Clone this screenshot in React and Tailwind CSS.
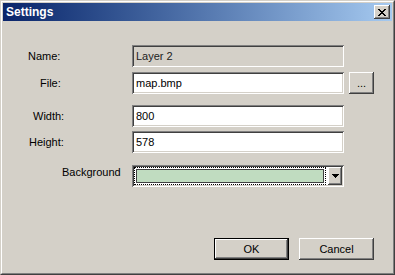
import React from "react";

const sunken =
  "shadow-[inset_1px_1px_#808080,inset_-1px_-1px_#ffffff,inset_2px_2px_#404040,inset_-2px_-2px_#d4d0c8]";
const raised =
  "shadow-[inset_-1px_-1px_#404040,inset_1px_1px_#ffffff,inset_-2px_-2px_#808080,inset_2px_2px_#d4d0c8]";

function Field({ value, disabled }) {
  return (
    <div
      className={`w-[212px] h-[22px] flex items-center pl-[4px] ${sunken} ${
        disabled ? "bg-[#d4d0c8] text-[#222]" : "bg-white text-black"
      }`}
    >
      {value}
    </div>
  );
}

function Label({ children, pl, extra = "" }) {
  return (
    <div className={`w-[129px] shrink-0 ${extra}`}>
      <span className={pl}>{children}</span>
    </div>
  );
}

function CloseGlyph() {
  const rows = [
    "XX....XX",
    ".XX..XX.",
    "..XXXX..",
    "...XX...",
    "..XXXX..",
    ".XX..XX.",
    "XX....XX",
  ];
  const rects = [];
  rows.forEach((r, y) =>
    r.split("").forEach((c, x) => {
      if (c === "X") rects.push(<rect key={`${x}-${y}`} x={x} y={y} width="1" height="1" />);
    })
  );
  return (
    <svg width="8" height="7" viewBox="0 0 8 7" shapeRendering="crispEdges" fill="#000">
      {rects}
    </svg>
  );
}

export default function App() {
  return (
    <div className="w-[395px] h-[275px] bg-[#d4d0c8] border border-t-[#d4d0c8] border-l-[#d4d0c8] border-r-[#404040] border-b-[#404040] font-['Liberation_Sans',Arial,sans-serif] text-[11px] text-black leading-[13px]">
      <div className="h-full border border-t-white border-l-white border-r-[#808080] border-b-[#808080] p-[1px] flex flex-col">
        {/* Title bar */}
        <div className="h-[18px] shrink-0 flex items-center justify-between pl-[3px] pr-[2px] bg-linear-to-r from-[#0a246a] to-[#a6caf0]">
          <span className="text-white font-bold text-[12px] leading-[14px]">Settings</span>
          <div className={`w-[16px] h-[14px] bg-[#d4d0c8] flex items-center justify-center ${raised}`}>
            <CloseGlyph />
          </div>
        </div>

        {/* Body */}
        <div className="flex-1 flex flex-col">
          <div className="mt-[24px] flex flex-col">
            <div className="flex items-center h-[22px]">
              <Label pl="pl-[25px]">Name:</Label>
              <Field value="Layer 2" disabled />
            </div>
            <div className="flex items-center h-[22px] mt-[5px]">
              <Label pl="pl-[37px]">File:</Label>
              <Field value="map.bmp" />
              <div
                className={`ml-[5px] w-[25px] h-[22px] bg-[#d4d0c8] flex items-center justify-center ${raised}`}
              >
                ...
              </div>
            </div>
            <div className="flex items-center h-[22px] mt-[11px]">
              <Label pl="pl-[30px]">Width:</Label>
              <Field value="800" />
            </div>
            <div className="flex items-center h-[22px] mt-[4px]">
              <Label pl="pl-[26px]">Height:</Label>
              <Field value="578" />
            </div>
            <div className="flex items-center h-[22px] mt-[12px]">
              <Label pl="pl-[59px]" extra="mb-[8px]">
                Background
              </Label>
              <div className={`w-[212px] h-[22px] bg-white p-[2px] flex ${sunken}`}>
                <div className="flex-1 flex pr-[2px]">
                  <div className="flex-1 border border-dotted border-black p-[1px] flex">
                    <div className="flex-1 bg-[#c0dcc0] border border-[#404040]" />
                  </div>
                </div>
                <div className={`w-[14px] h-[18px] bg-[#d4d0c8] flex items-center justify-center ${raised}`}>
                  <svg width="7" height="4" viewBox="0 0 7 4" shapeRendering="crispEdges">
                    <path d="M0 0H7L3.5 4Z" fill="#000" />
                  </svg>
                </div>
              </div>
            </div>
          </div>

          {/* Buttons */}
          <div className="mt-auto mb-[12px] flex justify-end gap-[10px] pr-[18px]">
            <div className="w-[75px] h-[22px] border border-black">
              <div className={`w-full h-full bg-[#d4d0c8] flex items-center justify-center ${raised}`}>OK</div>
            </div>
            <div className={`w-[75px] h-[22px] bg-[#d4d0c8] flex items-center justify-center ${raised}`}>
              Cancel
            </div>
          </div>
        </div>
      </div>
    </div>
  );
}
